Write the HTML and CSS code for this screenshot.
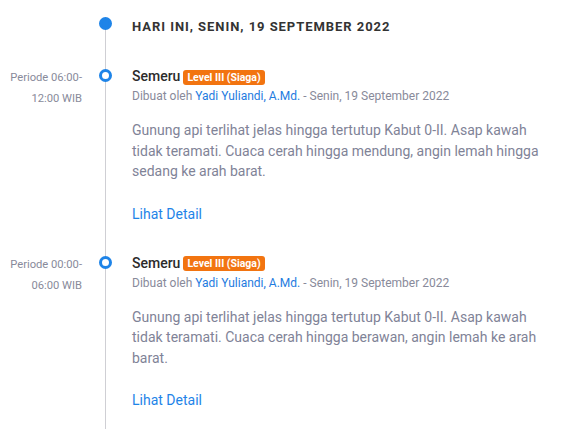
FILE: index.html
```html
<!DOCTYPE html>
<html lang="id">
<head>
<meta charset="utf-8">
<link rel="stylesheet" href="styles.css">
</head>
<body>
<div class="timeline">
  <div class="row head">
    <div class="period"></div>
    <div class="rail rail-start"><span class="dot dot-filled"></span></div>
    <div class="content">
      <h2 class="day">HARI INI, SENIN, 19 SEPTEMBER 2022</h2>
    </div>
  </div>

  <div class="row item">
    <div class="period">Periode 06:00-<br>12:00 WIB</div>
    <div class="rail"><span class="dot"></span></div>
    <div class="content">
      <div class="title">Semeru <span class="badge">Level III (Siaga)</span></div>
      <div class="meta">Dibuat oleh <a class="author">Yadi Yuliandi, A.Md.</a> - Senin, 19 September 2022</div>
      <p class="desc">Gunung api terlihat jelas hingga tertutup Kabut 0-II. Asap kawah tidak teramati. Cuaca cerah hingga mendung, angin lemah hingga sedang ke arah barat.</p>
      <a class="detail">Lihat Detail</a>
    </div>
  </div>

  <div class="row item">
    <div class="period">Periode 00:00-<br>06:00 WIB</div>
    <div class="rail"><span class="dot"></span></div>
    <div class="content">
      <div class="title">Semeru <span class="badge">Level III (Siaga)</span></div>
      <div class="meta">Dibuat oleh <a class="author">Yadi Yuliandi, A.Md.</a> - Senin, 19 September 2022</div>
      <p class="desc">Gunung api terlihat jelas hingga tertutup Kabut 0-II. Asap kawah tidak teramati. Cuaca cerah hingga berawan, angin lemah ke arah barat.</p>
      <a class="detail">Lihat Detail</a>
    </div>
  </div>
</div>
</body>
</html>
```

FILE: styles.css
```css
html, body {
  margin: 0;
  padding: 0;
  background: #ffffff;
}

body {
  font-family: Roboto, "Liberation Sans", sans-serif;
  color: #2b2b2b;
}

.timeline {
  width: 552px;
}

.row {
  display: grid;
  grid-template-columns: 99px 13px 1fr;
}

.rail {
  background: linear-gradient(#cfcfd4, #cfcfd4) center top / 1px 100% no-repeat;
}

.rail-start {
  background-position: center bottom;
  background-size: 1px calc(100% - 24px);
}

.dot {
  display: block;
  box-sizing: border-box;
  width: 13px;
  height: 13px;
  border-radius: 50%;
  background: #ffffff;
  border: 3px solid #1e84e8;
}

.dot-filled {
  background: #1e84e8;
  margin-top: 17px;
}

.head .content {
  padding-top: 19px;
  padding-bottom: 31px;
}

.day {
  margin: 0;
  font-size: 13px;
  font-weight: 700;
  letter-spacing: 0.95px;
  line-height: 16px;
  color: #333333;
}

.item .dot {
  margin-top: 3px;
}

.period {
  padding-right: 17px;
  text-align: right;
  font-size: 11.2px;
  line-height: 21px;
  color: #888a9a;
  padding-top: 1px;
}

.content {
  padding-left: 20px;
  min-width: 0;
}

.item .content {
  padding-bottom: 29px;
}

.title {
  display: flex;
  align-items: center;
  gap: 3px;
  font-size: 14px;
  font-weight: 500;
  line-height: 20px;
  color: #2b2b2b;
  height: 20px;
}

.badge {
  display: inline-block;
  background: #f27410;
  color: #ffffff;
  font-size: 10.5px;
  font-weight: 700;
  line-height: 15px;
  padding: 0 4px;
  border-radius: 3px;
  margin-top: 2px;
}

.meta {
  font-size: 12px;
  line-height: 18px;
  color: #888a9a;
  margin-top: 1px;
}

.author {
  color: #1e7be0;
  text-decoration: none;
}

.desc {
  margin: 15px 0 0;
  font-size: 14px;
  line-height: 20.5px;
  color: #7f8397;
}

.detail {
  display: block;
  margin-top: 22px;
  font-size: 14px;
  line-height: 20px;
  color: #1e84e8;
  text-decoration: none;
}
```
